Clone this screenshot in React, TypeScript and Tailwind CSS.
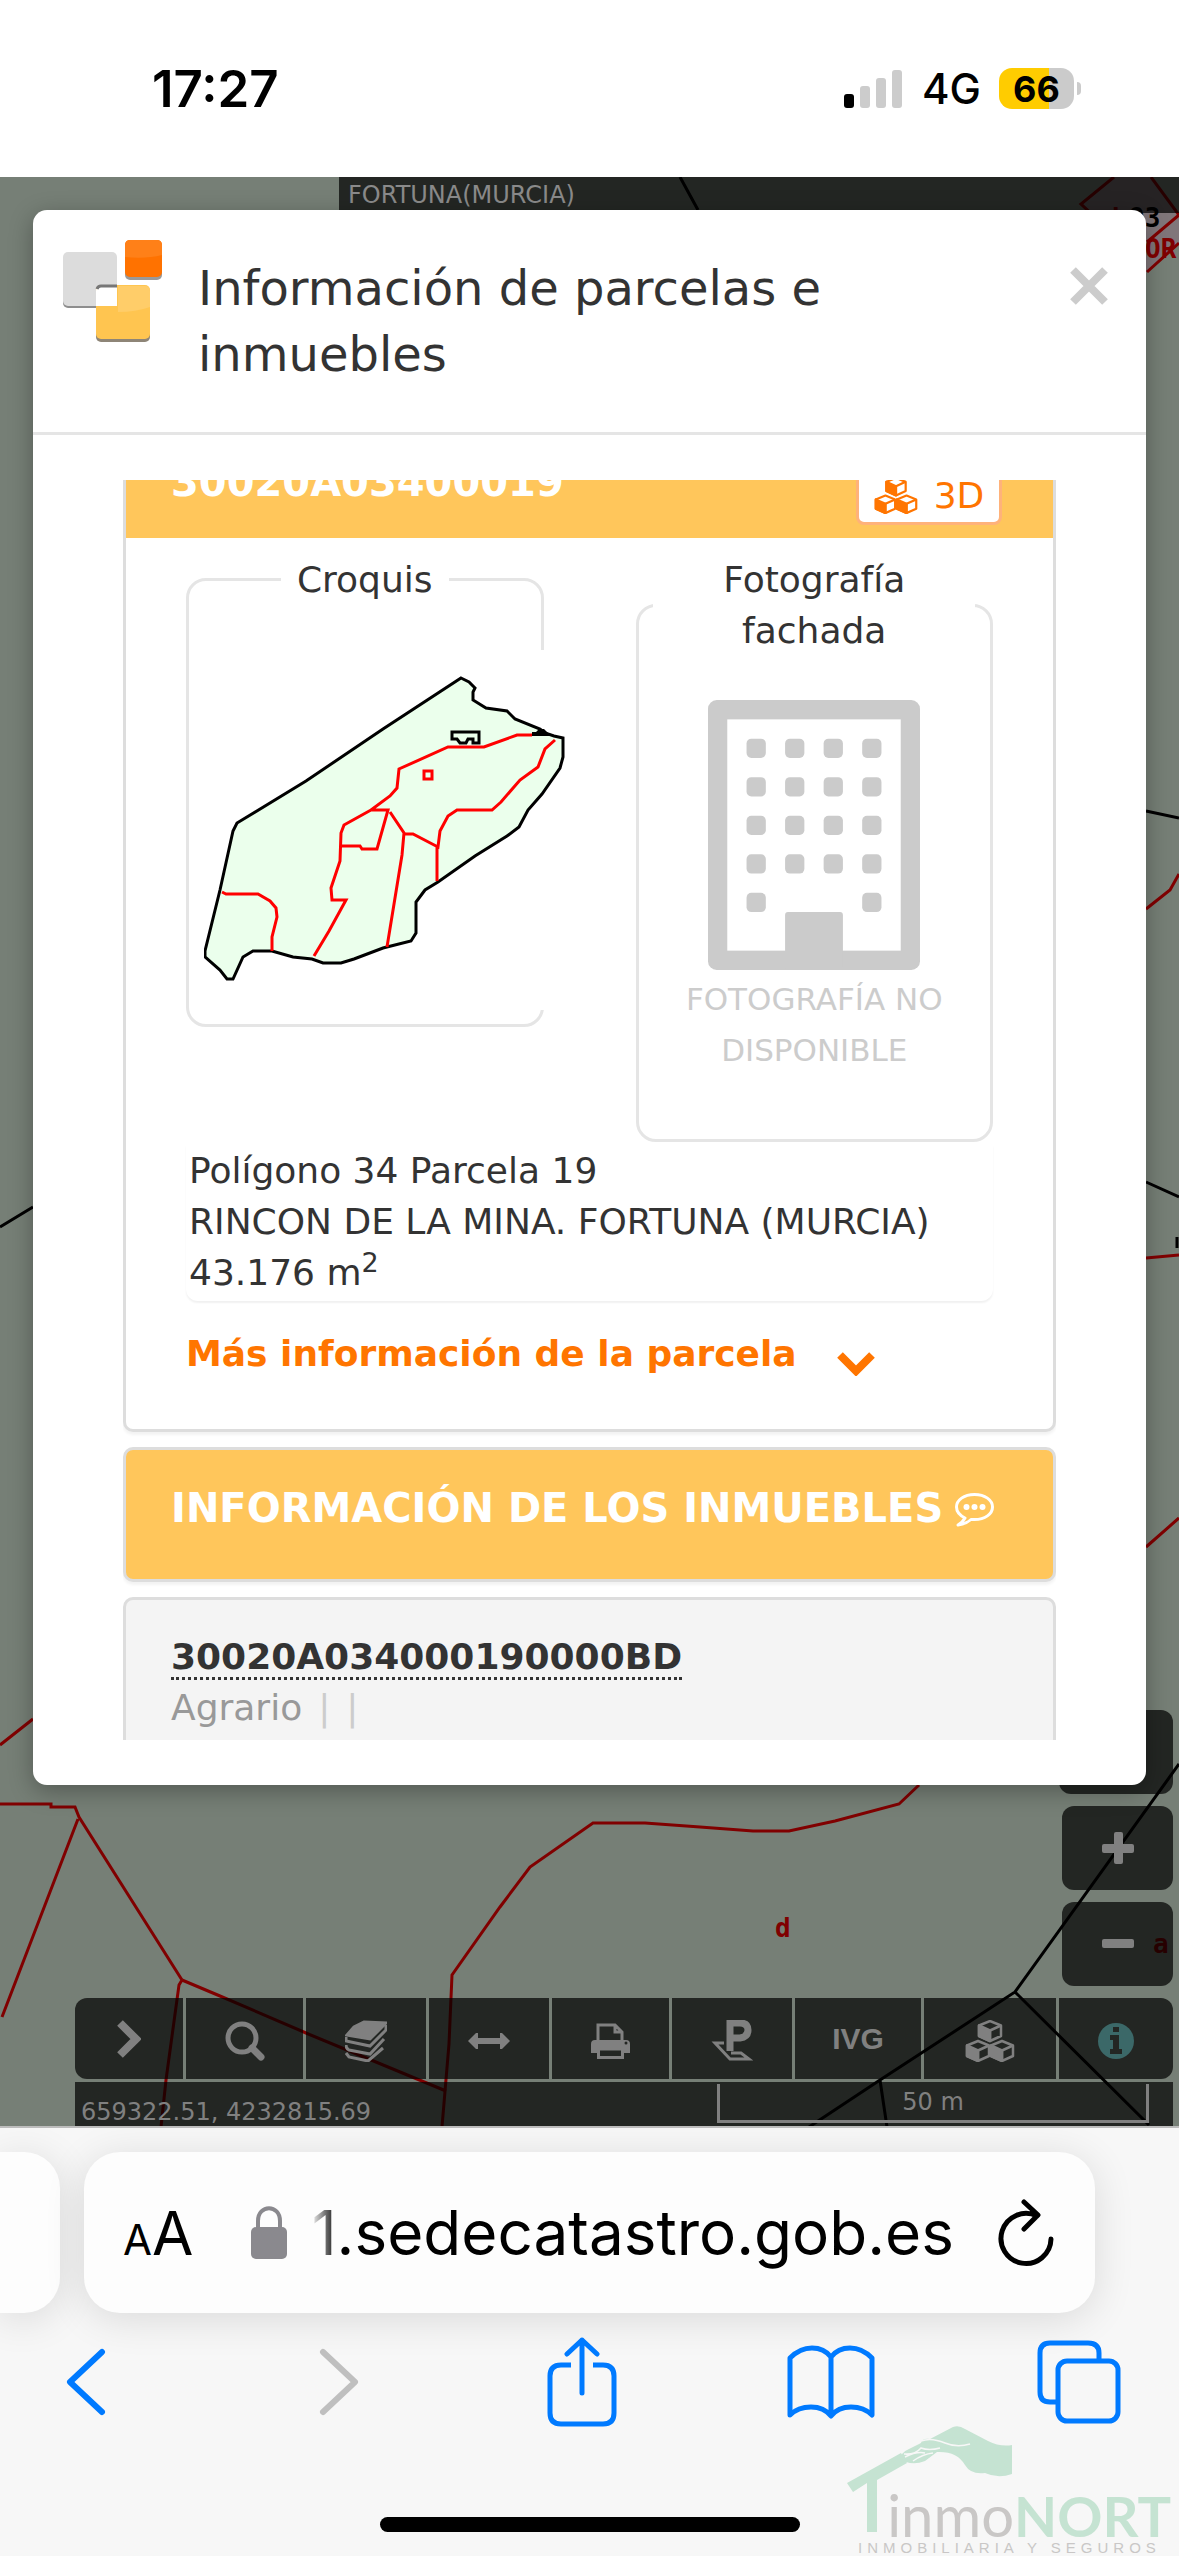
import React from "react";

const verdana = "font-['DejaVu_Sans',Verdana,sans-serif]";

function StatusBar() {
  return (
    <header className="flex h-[177px] items-center justify-between bg-white pr-[98px] pl-[152px] font-['Inter',sans-serif] text-black">
      <time className="text-[51px] leading-none font-semibold">17:27</time>
      <div className="flex items-center">
        <svg className="mr-5 h-[38px] w-[58px]" viewBox="0 0 58 38" aria-label="Cobertura">
          <rect x="0" y="24" width="10" height="14" rx="3" fill="#000" />
          <rect x="16" y="16" width="10" height="22" rx="3" fill="#ccc" />
          <rect x="32" y="8" width="10" height="30" rx="3" fill="#ccc" />
          <rect x="48" y="0" width="10" height="38" rx="3" fill="#ccc" />
        </svg>
        <span className="mr-[18px] text-[42px] leading-none font-medium">4G</span>
        <div className="flex h-[41px] w-[75px] items-center justify-center rounded-[13px] bg-linear-to-r from-[#ffcc00] from-67% to-[#cbcbcb] to-67%">
          <span className="text-[36px] leading-none font-bold">66</span>
        </div>
        <div className="ml-[3px] h-[13px] w-1 rounded-r-full bg-[#cbcbcb]" />
      </div>
    </header>
  );
}

function MapLines() {
  return (
    <svg
      className="absolute inset-0 h-full w-full"
      viewBox="0 177 1179 1949"
      preserveAspectRatio="xMidYMax slice"
      fill="none"
      strokeWidth="3"
      aria-hidden="true"
    >
      <path d="M1114 177 1081 204 1147 272 1179 243V215L1151 177Z" fill="#80767a" />
      <g stroke="#800000">
        <path d="M1114 177 1081 204 1096 218M1151 177 1179 215 1147 242M1147 272 1179 243" />
        <path d="M0 1745 33 1719M0 1804H51V1807H75L79 1817 182 1980M78 1819 2 2017M182 1980 179 1985 166 2080 161 2127" />
        <path d="M182 1980 220 1996 306 2033 446 2091" />
        <path d="M919 1785 899 1804 835 1821 789 1831H753L700 1827 645 1823H593L530 1867 500 1907 452 1975 449 2044 442 2127" />
        <path d="M1146 909 1170 890 1179 874M1146 1258 1179 1255M1146 1547 1179 1518" />
      </g>
      <g stroke="#000">
        <path d="M680 177 698 210M1146 811 1179 818M0 1227 33 1207M1146 1182 1179 1197M1177 1237V1248" />
        <path d="M1179 1764 1015 1992 880 2080 809 2127M880 2080 887 2127M1015 1992 1149 2125" />
      </g>
      <g className="font-['DejaVu_Sans_Mono',monospace]" fontSize="26" fontWeight="bold" fill="#800000">
        <text x="775" y="1937">d</text>
        <text x="1153" y="1953">a</text>
        <text x="1145" y="258">OR</text>
        <text x="1112" y="227">b</text>
        <text x="1129" y="227" fill="#000">93</text>
      </g>
    </svg>
  );
}

function Cubes({ className }: { className: string }) {
  return (
    <svg className={className} viewBox="0 0 50 42" fill="none" stroke="currentColor" strokeWidth="2.500" strokeLinejoin="round" aria-hidden="true">
      {["translate(13 0)", "translate(1 20)", "translate(25 20)"].map((t) => (
        <g key={t} transform={t}>
          <path d="M12 1 23 5.500V16L12 21 1 16V5.500Z" />
          <path d="M12 21V10.500L23 5.500" />
          <path d="M1 5.500 12 10.500V21L1 16Z" fill="currentColor" />
        </g>
      ))}
    </svg>
  );
}

function ModalLogo() {
  return (
    <svg className="mt-[30px] h-[102px] w-[99px] shrink-0" viewBox="0 0 99 102" aria-hidden="true">
      <rect x="0" y="15" width="54" height="53" rx="5" fill="#8e8e8e" />
      <rect x="0" y="12" width="54" height="54" rx="5" fill="#dcdcdc" />
      <rect x="33" y="48" width="54" height="54" rx="5" fill="#8e8577" />
      <rect x="33" y="45" width="54" height="54" rx="5" fill="#ffc550" />
      <path d="M55 46h27q5 0 5 5v16q-14 5-32 5z" fill="#ffcd69" />
      <path d="M33 66V51q0-5 5-5h16v20z" fill="#fff" />
      <path d="M34 49q1-3 4-3h16" stroke="#777" strokeWidth="3" fill="none" />
      <rect x="62" y="3" width="37" height="37" rx="5" fill="#999" />
      <rect x="62" y="0" width="37" height="37" rx="5" fill="#ff7200" />
      <path d="M67 0h27q5 0 5 5v10q-16 4-37 2V5q0-5 5-5z" fill="#ff8018" />
    </svg>
  );
}

function Parcel() {
  return (
    <svg className="mt-[45px] ml-[15px] h-[360px] w-[363px] max-w-none bg-white" viewBox="0 0 363 360" fill="none" strokeWidth="3" role="img" aria-label="Croquis de la parcela">
      <path
        d="M257 28 265 32 271 38 269 42V50L282 58 303 61 311 69 336 79 341 83 350 86 359 88V107L356 118 338 144 324 160 315 177 303 186 271 206 234 232 221 240 212 252V283L207 291 179 298 150 309 137 313H119L108 309 89 307 68 301H49L39 307 29 329H23L16 320 1 307V301L16 240 29 181 33 173 102 131 179 79Z"
        fill="#ebffec"
        stroke="#000"
      />
      <g stroke="#f00">
        <path d="M18 242 22 244H54L66 251 72 258 73 267 68 287V301" />
        <path d="M328 85H313L280 97H244L195 119 193 138 186 146 167 160H184L173 199H158L156 196H137M167 160 140 175 137 183 136 211 127 238 128 250H142L125 281 110 306" />
        <path d="M186 162 200 183 198 205 183 297M200 184H209L234 197 236 181 244 166 253 160H288L297 152 316 130 334 117 341 99 351 90M233 197V231" />
        <rect x="220" y="121" width="8" height="8" />
      </g>
      <path d="M248 82H275V93H269V89H264L262 93H256L253 89H248Z" stroke="#000" />
      <path d="M328 82H332L335 79H340L344 83 352 86H328Z" fill="#000" />
    </svg>
  );
}

function Building() {
  const windows = [2, 4, 6, 8].flatMap((y) => [2, 4, 6, 8].map((x) => [x, y])).concat([[2, 10], [8, 10]]);
  return (
    <svg className="mx-auto mt-11 h-[270px] w-[212px]" viewBox="0 0 11 14" fill="#cbcbcb" aria-hidden="true">
      <rect width="11" height="14" rx=".45" />
      <rect x="1" y="1" width="9" height="12" fill="#fff" />
      {windows.map(([x, y]) => (
        <rect key={`${x}-${y}`} x={x} y={y} width="1" height="1" rx=".25" />
      ))}
      <rect x="4" y="11" width="3" height="3" rx=".15" />
    </svg>
  );
}

function Modal() {
  return (
    <section
      role="dialog"
      aria-labelledby="titulo"
      className="absolute inset-x-[33px] top-[33px] rounded-[14px] bg-white text-[#333] shadow-[0_6px_24px_rgba(0,0,0,0.3)]"
    >
      <div className="flex h-[225px] items-start border-b-3 border-[#e5e5e5] pr-[38px] pl-[30px]">
        <ModalLogo />
        <h1 id="titulo" className="mt-[45px] ml-9 flex-1 pr-6 text-[48px] leading-[66px]">
          Información de parcelas e inmuebles
        </h1>
        <button type="button" aria-label="Cerrar" className="mt-[57px] text-[#ccc]">
          <svg className="h-[38px] w-[38px]" viewBox="0 0 38 38" stroke="currentColor" strokeWidth="8">
            <path d="M3 3 35 35M35 3 3 35" />
          </svg>
        </button>
      </div>

      <div className="px-[90px] py-[45px]">
        <div className="h-[1260px] overflow-hidden text-[36px] leading-[51px]">
          <div className="-mt-[65px] flex flex-col gap-[15px]">
            <article className="rounded-[10px] border-3 border-[#ddd] bg-white shadow-[0_3px_3px_rgba(0,0,0,0.05)]">
              <div className="flex h-[120px] items-end justify-between bg-[#ffc65b] pr-[51px] pb-[13px] pl-[45px]">
                <h2 className="mb-[17px] text-[40px] font-bold text-white">30020A03400019</h2>
                <button
                  type="button"
                  className="flex h-[60px] w-[146px] items-center justify-center gap-4 rounded-lg border-3 border-[#ffb27a] bg-white text-[#ff7500]"
                >
                  <Cubes className="h-[37px] w-[44px]" />
                  3D
                </button>
              </div>
              <div className="px-[60px] pt-4 pb-[50px]">
                <div className="grid grid-cols-2 items-start gap-[92px]">
                  <fieldset className="min-w-0 rounded-[20px] border-3 border-[#e5e5e5] pb-[14px]">
                    <legend className="mx-auto px-4">Croquis</legend>
                    <Parcel />
                  </fieldset>
                  <fieldset className="min-w-0 rounded-[20px] border-3 border-[#e5e5e5] pb-[63px]">
                    <legend className="mx-auto w-[322px] text-center">
                      Fotografía
                      <br />
                      fachada
                    </legend>
                    <Building />
                    <p className="mt-1 text-center text-[31px] text-[#ccc]">
                      FOTOGRAFÍA NO
                      <br />
                      DISPONIBLE
                    </p>
                  </fieldset>
                </div>
                <div className="mt-[3px] rounded-b-[12px] pb-[3px] pl-[3px] shadow-[0_2px_2px_rgba(0,0,0,0.06)]">
                  <p>Polígono 34 Parcela 19</p>
                  <p>RINCON DE LA MINA. FORTUNA (MURCIA)</p>
                  <p>
                    43.176 m<sup>2</sup>
                  </p>
                </div>
                <button type="button" className="mt-[27px] flex items-center gap-10 font-bold text-[#ff7500]">
                  Más información de la parcela
                  <svg className="mt-5 h-6 w-[38px]" viewBox="0 0 38 24" fill="none" stroke="currentColor" strokeWidth="8">
                    <path d="M3 3 19 19 35 3" />
                  </svg>
                </button>
              </div>
            </article>

            <article className="flex items-center gap-3 rounded-[10px] border-3 border-[#ddd] bg-[#ffc65b] pt-[33px] pb-[45px] pl-[45px] text-white shadow-[0_3px_3px_rgba(0,0,0,0.05)]">
              <h2 className="text-[40px] font-bold whitespace-nowrap">INFORMACIÓN DE LOS INMUEBLES</h2>
              <svg className="h-[36px] w-[39px] shrink-0" viewBox="0 0 39 36" fill="none" stroke="currentColor" strokeWidth="3" strokeLinejoin="round" aria-hidden="true">
                <path d="M10 27C4 24 1.500 20 1.500 16 1.500 9 9 3.500 19.500 3.500S37.500 9 37.500 16 30 28.500 19.500 28.500H16Q11 33 3 34 8 31 10 27Z" />
                <g fill="currentColor" stroke="none">
                  <circle cx="11.500" cy="16" r="3" />
                  <circle cx="19.500" cy="16" r="3" />
                  <circle cx="27.500" cy="16" r="3" />
                </g>
              </svg>
            </article>

            <article className="rounded-[10px] border-3 border-[#ddd] bg-[#f4f4f4] px-[45px] pt-[31px] pb-12">
              <p>
                <a href="#inmueble" className="border-b-3 border-dotted border-[#333] font-bold">
                  30020A034000190000BD
                </a>
              </p>
              <p className="flex gap-4 text-[#999]">
                Agrario
                <span className="text-[#ccc]">|</span>
                <span className="text-[#ccc]">|</span>
              </p>
            </article>
          </div>
        </div>
      </div>
    </section>
  );
}

function Tool({ label, className = "", children }: { label: string; className?: string; children: React.ReactNode }) {
  return (
    <button type="button" aria-label={label} className={`flex items-center justify-center bg-black/70 ${className}`}>
      {children}
    </button>
  );
}

function MapControls() {
  const line = { fill: "none", stroke: "currentColor", "aria-hidden": true } as const;
  return (
    <div className="absolute right-[6px] bottom-0 left-[75px] text-[#808080]">
      <div className="mb-3 flex flex-col items-end gap-3">
        <Tool label="Ubicación" className="h-[84px] w-[114px] rounded-xl">{null}</Tool>
        <Tool label="Acercar" className="h-[84px] w-[111px] rounded-xl">
          <svg className="h-8 w-8" viewBox="0 0 32 32" fill="currentColor" aria-hidden="true">
            <rect x="12" width="9" height="32" rx="2" />
            <rect y="12" width="32" height="9" rx="2" />
          </svg>
        </Tool>
        <Tool label="Alejar" className="h-[84px] w-[111px] rounded-xl">
          <svg className="h-8 w-8" viewBox="0 0 32 32" fill="currentColor" aria-hidden="true">
            <rect y="11" width="32" height="9" rx="2" />
          </svg>
        </Tool>
      </div>
      <div className="mb-[3px] grid h-[81px] grid-cols-[108fr_117fr_120fr_120fr_117fr_120fr_126fr_132fr_114fr] gap-[3px]">
        <Tool label="Desplegar" className="rounded-l-xl">
          <svg className="h-[38px] w-6" viewBox="0 0 24 38" {...line} strokeWidth="8">
            <path d="M3 3 19 19 3 35" />
          </svg>
        </Tool>
        <Tool label="Buscar">
          <svg className="mt-1 h-10 w-10" viewBox="0 0 40 40" {...line} strokeWidth="5">
            <circle cx="17" cy="17" r="14" />
            <path d="m27 27 9 9" strokeWidth="7" strokeLinecap="round" />
          </svg>
        </Tool>
        <Tool label="Capas">
          <svg className="mt-1 h-[42px] w-[42px]" viewBox="0 0 42 42" {...line} strokeWidth="3">
            <path d="M19 2 41 3 25 19 2 15 9 7Z" fill="currentColor" />
            <path d="M1 17v4l24 5L41 10v-5M1 25q0 4 3 5l21 4 14-15M1 33l3 4 19 4 15-13" />
          </svg>
        </Tool>
        <Tool label="Medir">
          <svg className="mt-1 h-4 w-[42px]" viewBox="0 0 42 16" fill="currentColor" aria-hidden="true">
            <path d="M0 8 8 0h2v5h22V0h2l8 8-8 8h-2v-5H10v5H8Z" />
          </svg>
        </Tool>
        <Tool label="Imprimir">
          <svg className="mt-1 h-9 w-[39px]" viewBox="0 0 39 36" {...line} strokeWidth="3">
            <path d="M7 18V2h17l7 7v9M24 2v7h7" />
            <path d="M4 17h31q4 0 4 4v9h-7v-5H7v5H0v-9q0-4 4-4Z" fill="currentColor" stroke="none" />
            <path d="M7.500 26h24v8.500h-24z" />
            <circle cx="35" cy="20" r="1.500" fill="#232623" stroke="none" />
          </svg>
        </Tool>
        <Tool label="Parcela">
          <svg className="mt-1 h-[42px] w-[42px]" viewBox="0 0 42 42" {...line}>
            <path d="M19 31V3h10q8 0 8 7t-8 8h-9" strokeWidth="7" />
            <path d="M13 23H4l15 16h19l-8-6H20" strokeWidth="3" />
          </svg>
        </Tool>
        <Tool label="IVG">
          <span className="font-['Liberation_Sans',sans-serif] text-[30px] font-bold">IVG</span>
        </Tool>
        <Tool label="Ver en 3D">
          <Cubes className="mt-1 h-[42px] w-[50px]" />
        </Tool>
        <Tool label="Información" className="rounded-r-xl">
          <svg className="mt-1 h-9 w-9" viewBox="0 0 36 36" aria-hidden="true">
            <circle cx="18" cy="18" r="18" fill="#3b6868" />
            <path d="M15 4h6v5h-6zM12 12h9v14h3v5H12v-5h3v-9h-3z" fill="#232623" />
          </svg>
        </Tool>
      </div>
      <div className="flex h-[44px] items-end justify-between bg-black/70 pr-6 pl-[6px] text-[24px] leading-7">
        <span>659322.51, 4232815.69</span>
        <span className="mb-[3px] h-[39px] w-[432px] border-3 border-t-0 border-[#808080] pt-1 text-center">50 m</span>
      </div>
    </div>
  );
}

function BrandMark() {
  return (
    <div className="absolute right-[8px] bottom-0 w-[324px]">
      <svg className="block h-[106px] w-[166px]" viewBox="0 0 166 106" fill="#c5e3d2" aria-hidden="true">
        <path d="M0 57 54 27 60 37 30 54V106H20V57L6 66Z" />
        <path d="M55 28Q57 25 62 23L74 17Q75 12 83 13L106 1Q112-1 118 3L141 15Q153 21 165 19V48Q151 53 138 47 124 49 118 39 110 25 90 26L78 35Q68 39 59 36 52 33 55 28Z" />
        <path d="M74 15Q84 11 98 17 110 22 123 18M78 27Q70 25 58 31M86 27Q76 28 66 35M93 22Q82 25 74 22 68 29 57 28" fill="none" stroke="#f7f7f7" strokeWidth="1.500" />
      </svg>
      <div className="absolute right-0 bottom-3 flex items-baseline leading-none">
        <span className="font-['Lato',sans-serif] text-[58px] text-[#c9c7c6]">inmo</span>
        <span className="font-['Lato',sans-serif] text-[56px] font-bold text-[#c5e3d2]">NORT</span>
      </div>
      <div className="pt-2 pl-[11px] font-['Liberation_Sans',sans-serif] text-[15px] leading-4 tracking-[5px] whitespace-nowrap text-[#c9c7c6]">
        INMOBILIARIA Y SEGUROS
      </div>
    </div>
  );
}

function BrowserChrome() {
  const item = "flex h-[90px] w-[88px] items-center justify-center text-[#007aff]";
  const line = { fill: "none", stroke: "currentColor", strokeWidth: 6, strokeLinecap: "round", strokeLinejoin: "round", "aria-hidden": true } as const;
  return (
    <footer className="relative h-[430px] overflow-hidden border-t-2 border-[#bcbcbc] bg-[#f7f7f7]">
      <div className="flex gap-6 pt-6 pr-[84px]">
        <div className="h-[161px] w-[60px] rounded-r-[36px] bg-[#fdfdfd] shadow-[0_6px_40px_rgba(0,0,0,0.12)]" />
        <div className="flex h-[161px] flex-1 items-center rounded-[36px] bg-[#fdfdfd] pr-[41px] pl-[39px] font-['Inter',sans-serif] text-black shadow-[0_6px_40px_rgba(0,0,0,0.12)]">
          <button type="button" aria-label="Ajustes de página" className="flex items-baseline leading-none">
            <span className="text-[42px]">A</span>
            <span className="text-[60px]">A</span>
          </button>
          <svg className="mr-6 ml-[58px] h-[53px] w-9 shrink-0" viewBox="0 0 36 53" fill="#8a898e" aria-hidden="true">
            <rect y="21" width="36" height="32" rx="5" />
            <path d="M7 23V15C7-2 29-2 29 15v8" fill="none" stroke="#8a898e" strokeWidth="4" />
          </svg>
          <span className="bg-linear-to-r from-[#fdfdfd] to-black to-5% bg-clip-text text-[62px] leading-[90px] whitespace-nowrap text-transparent">
            1.sedecatastro.gob.es
          </span>
          <button type="button" aria-label="Recargar" className="ml-auto">
            <svg className="h-[68px] w-[56px]" viewBox="0 0 56 68" {...line} strokeWidth={5}>
              <path d="M53 40A25 25 0 1 1 39 17M26 3 40 16 26 30" />
            </svg>
          </button>
        </div>
      </div>

      <nav className="mt-6 flex items-center justify-between pr-14 pl-[41px]">
        <button type="button" aria-label="Atrás" className={item}>
          <svg className="h-[68px] w-[44px]" viewBox="0 0 44 68" {...line}>
            <path d="M39 4 7 34 39 64" />
          </svg>
        </button>
        <button type="button" aria-label="Adelante" className="flex h-[90px] w-[88px] items-center justify-end pr-4 text-[#bfbfbf]">
          <svg className="h-[68px] w-[44px]" viewBox="0 0 44 68" {...line}>
            <path d="M5 4 37 34 5 64" />
          </svg>
        </button>
        <button type="button" aria-label="Compartir" className={item}>
          <svg className="h-[90px] w-[70px]" viewBox="0 0 70 90" {...line} strokeWidth={5}>
            <path d="M24 28H14Q3 28 3 39V76Q3 87 14 87H56Q67 87 67 76V39Q67 28 56 28H46" strokeLinecap="butt" />
            <path d="M35 56V3M20 17 35 3 50 17" />
          </svg>
        </button>
        <button type="button" aria-label="Marcadores" className={item}>
          <svg className="h-[74px] w-[88px]" viewBox="0 0 88 74" {...line} strokeWidth={5}>
            <path d="M44 12Q37 3 25 3T3 13V70Q11 62 24 62T44 71Q51 62 64 62T85 70V13Q75 3 63 3T44 12V70" />
          </svg>
        </button>
        <button type="button" aria-label="Pestañas" className={item}>
          <svg className="h-[84px] w-[84px]" viewBox="0 0 84 84" {...line} strokeWidth={5}>
            <path d="M20 62H13Q3 62 3 52V13Q3 3 13 3H51Q62 3 62 13V19" strokeLinecap="butt" />
            <rect x="21" y="21" width="60" height="60" rx="9" />
          </svg>
        </button>
      </nav>
      <div className="mx-auto mt-[90px] h-[15px] w-[420px] rounded-full bg-black" />
      <BrandMark />
    </footer>
  );
}

export default function App() {
  return (
    <div className="flex min-h-screen flex-col">
      <StatusBar />
      <main className={`relative min-h-[1949px] flex-1 overflow-hidden bg-[#767f76] ${verdana}`}>
        <MapLines />
        <div className="absolute top-0 right-0 left-[339px] h-9 bg-black/70 pl-[9px] text-[24px] leading-9 text-[#8a8a8a]">
          FORTUNA(MURCIA)
        </div>
        <MapControls />
        <Modal />
      </main>
      <BrowserChrome />
    </div>
  );
}
